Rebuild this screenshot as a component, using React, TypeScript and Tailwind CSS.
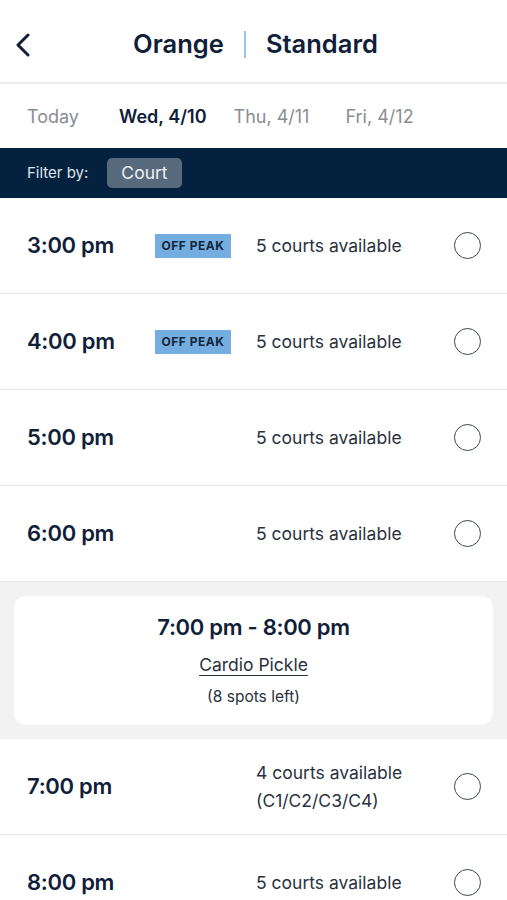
import { ReactNode } from 'react'

const navy = 'text-[#0f2038]'

function Radio() {
  return <div className="h-[27px] w-[27px] shrink-0 rounded-full border-[1.5px] border-[#3b4452]" />
}

function OffPeak() {
  return (
    <span className="flex h-[24px] w-[76px] items-center justify-center bg-[#74aee0] text-[12px] font-bold tracking-[0.5px] text-[#13243b]">
      OFF PEAK
    </span>
  )
}

interface SlotProps {
  time: string
  offPeak?: boolean
  children: ReactNode
}

function Slot({ time, offPeak, children }: SlotProps) {
  return (
    <div className="flex h-[96px] items-center border-b border-[#e6e6e6] pl-[27px] pr-[26px]">
      <div className={`w-[128px] text-[22px] font-semibold tracking-[-0.3px] ${navy}`}>{time}</div>
      <div className="w-[101px]">{offPeak && <OffPeak />}</div>
      <div className="flex-1 text-[17.5px] leading-[28px] text-[#2a3140]">{children}</div>
      <Radio />
    </div>
  )
}

export default function App() {
  return (
    <div className="h-[900px] w-[507px] overflow-hidden bg-white" style={{ fontFamily: 'Inter, "Noto Sans", sans-serif' }}>
      {/* header */}
      <div className="relative flex h-[84px] items-center justify-center border-b-2 border-[#ededed]">
        <svg className="absolute left-[14px] top-[33px]" width="18" height="24" viewBox="0 0 18 24" fill="none">
          <path d="M14 2 L4 12 L14 22" stroke="#0f2038" strokeWidth="3" strokeLinecap="round" strokeLinejoin="round" />
        </svg>
        <div className={`flex items-center pl-[4px] pt-[7px] text-[25.5px] font-semibold ${navy}`}>
          <span>Orange</span>
          <span className="mx-[20px] h-[27px] w-[2px] bg-[#9cc2e5]" />
          <span>Standard</span>
        </div>
      </div>

      {/* days */}
      <div className="flex h-[64px] items-center pl-[27px] text-[18px]">
        <span className="mr-[40px] text-[#8a8d92]">Today</span>
        <span className={`mr-[27px] font-semibold ${navy}`}>Wed, 4/10</span>
        <span className="mr-[36px] text-[#8a8d92]">Thu, 4/11</span>
        <span className="text-[#8a8d92]">Fri, 4/12</span>
      </div>

      {/* filter */}
      <div className="flex h-[50px] items-center bg-[#04223f] pl-[27px]">
        <span className="mr-[19px] text-[15px] text-[#dfe4ea]">Filter by:</span>
        <span className="flex h-[30px] items-center rounded-[5px] bg-[#57697c] px-[14px] text-[17.5px] text-[#eef1f4]">
          Court
        </span>
      </div>

      <Slot time="3:00 pm" offPeak>5 courts available</Slot>
      <Slot time="4:00 pm" offPeak>5 courts available</Slot>
      <Slot time="5:00 pm">5 courts available</Slot>
      <Slot time="6:00 pm">5 courts available</Slot>

      {/* class card */}
      <div className="bg-[#f2f2f2] px-[14px] pb-[14px] pt-[14px]">
        <div className="flex h-[129px] flex-col items-center rounded-[12px] bg-white pt-[15px]">
          <div className={`text-[22px] font-semibold tracking-[-0.3px] ${navy}`}>7:00 pm - 8:00 pm</div>
          <div className="mt-[8px] text-[17.5px] text-[#2a3140] underline underline-offset-[4px]">Cardio Pickle</div>
          <div className="mt-[7px] text-[15.5px] text-[#2a3140]">(8 spots left)</div>
        </div>
      </div>

      <Slot time="7:00 pm">
        <div>4 courts available</div>
        <div>(C1/C2/C3/C4)</div>
      </Slot>
      <Slot time="8:00 pm">5 courts available</Slot>
    </div>
  )
}
